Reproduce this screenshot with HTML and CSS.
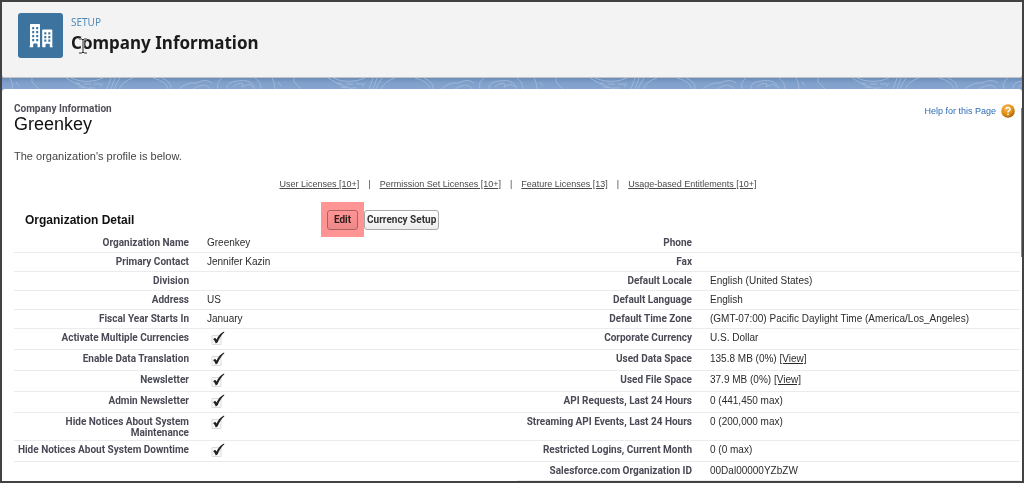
FILE: index.html
```html
<!DOCTYPE html>
<html lang="en">
<head>
<meta charset="utf-8">
<title>Company Information</title>
<link rel="stylesheet" href="styles.css">
</head>
<body>
<svg class="defs" width="0" height="0" aria-hidden="true">
  <symbol id="check" viewBox="0 0 16 15">
    <path d="M3.500 4.500h9v9h-9z" fill="#fafafa" stroke="#dcdcdc"/>
    <path d="M4.600 8.200l2-1.400 1.500 1.800C9.600 5.200 12 2.200 15.500.6L15.900 1.200C13 3.700 10.800 7 9.200 11.300L7.300 12.500C6.600 10.600 5.800 9.200 4.600 8.200z" fill="#222"/>
  </symbol>
</svg>
<div class="window">
  <header class="setup-header">
    <div class="tile">
      <svg width="24" height="24" viewBox="0 0 24 24" aria-hidden="true">
        <path fill="#fff" fill-rule="evenodd" d="M1 .8Q1 0 1.800 0H10.200Q11 0 11 .8V22.500Q11 23.300 10.200 23.300H8.500V20.300Q8.500 19.500 7.700 19.500H5Q4.200 19.500 4.200 20.300V23.300H1Q.2 23.300 .4 22.500L1 22zM3.200 3v2.200h2V3zM7.200 3v2.200h2V3zM3.200 7v2.200h2V7zM7.200 7v2.200h2V7zM3.200 11v2.200h2V11zM7.200 11v2.200h2V11zM3.200 15v2.200h2V15zM7.200 15v2.200h2V15z"/>
        <path fill="#fff" fill-rule="evenodd" d="M13.200 6.300Q13.200 5.500 14 5.500H22.500Q23.300 5.500 23.300 6.300V22L23.800 22.700Q23.800 23.300 23 23.300H20.800V20.500Q20.800 19.700 20 19.700H17.300Q16.500 19.700 16.500 20.500V23.300H14Q13.200 23.300 13.200 22.500zM15.300 8.300v2.200h2V8.300zM19.300 8.300v2.200h2V8.300zM15.300 12v2.200h2V12zM19.300 12v2.200h2V12zM15.300 15.500v2.200h2v-2.200zM19.300 15.500v2.200h2v-2.200z"/>
      </svg>
    </div>
    <div class="titles">
      <div class="eyebrow">SETUP</div>
      <h1 class="title">Company Information
        <svg class="cursor" width="10" height="16" viewBox="0 0 10 16" aria-hidden="true"><path d="M1 1h3l1 1 1-1h3M5 2v12M1 15h3l1-1 1 1h3" fill="none" stroke="#fff" stroke-width="2.500"/><path d="M1 1h3l1 1 1-1h3M5 2v12M1 15h3l1-1 1 1h3" fill="none" stroke="#222"/></svg>
      </h1>
    </div>
  </header>
  <svg class="band" height="11" aria-hidden="true">
    <defs>
      <linearGradient id="shade" x1="0" y1="0" x2="0" y2="1"><stop offset="0" stop-color="#6a8cb5"/><stop offset=".4" stop-color="#7f9fcb"/><stop offset="1" stop-color="#86a6d1"/></linearGradient>
      <pattern id="contours" width="262" height="11" patternUnits="userSpaceOnUse">
        <path d="M8 0Q11 5 11 11M14 4l3 4M30 0v4l7 7M64 0Q74 7 88 11M69 0Q85 7 101 0M74 5l4 1M82 6h7M92 6h7M77 9l6 1M87 10h6M98 9l3-4M109 0l-4 11M113 0l-4 11M118 0Q114 6 112 11M131 0Q121 3 117 11M151 0Q164 3 166 11M160 0Q170 4 169 11M177 11Q185 4 194 5Q204 0 210 5M191 11Q204 3 208 11M216 11Q214 4 220 0M225 11Q224 4 235 3Q250 0 253 11M231 9Q236 4 241 6L240 9L247 6L251 9M253 0Q259 4 259 11" fill="none" stroke="#a9c0df" stroke-opacity=".7"/>
      </pattern>
    </defs>
    <rect width="100%" height="11" fill="url(#shade)"/>
    <rect width="100%" height="11" fill="url(#contours)"/>
  </svg>
  <main class="content">
    <div class="page-head">
      <div>
        <div class="page-type">Company Information</div>
        <h2 class="page-name">Greenkey</h2>
      </div>
      <a class="help" href="#">Help for this Page
        <svg width="14" height="14" viewBox="0 0 14 14" aria-hidden="true">
          <defs><radialGradient id="amber" cx=".4" cy=".3" r=".75"><stop offset="0" stop-color="#f3b755"/><stop offset=".6" stop-color="#e08f14"/><stop offset="1" stop-color="#9c5d08"/></radialGradient></defs>
          <circle cx="7" cy="7" r="6.800" fill="url(#amber)"/>
          <path d="M4.900 5.300Q5 3.400 7 3.400T9.100 5.200Q9.100 6.300 7.900 6.900Q7 7.400 7 8.400M7 9.700v1.500" fill="none" stroke="#fff" stroke-width="1.500"/>
        </svg>
      </a>
    </div>
    <p class="intro">The organization's profile is below.</p>
    <nav class="jump">
      <a href="#">User Licenses [10+]</a><span class="bar">|</span>
      <a href="#">Permission Set Licenses [10+]</a><span class="bar">|</span>
      <a href="#">Feature Licenses [13]</a><span class="bar">|</span>
      <a href="#">Usage-based Entitlements [10+]</a>
    </nav>
    <div class="section-head">
      <h3 class="section-title">Organization Detail</h3>
      <div class="actions">
        <span class="highlight"><button class="btn" type="button">Edit</button></span>
        <button class="btn" type="button">Currency Setup</button>
      </div>
    </div>
    <table class="detail">
      <colgroup><col class="c-label"><col class="c-value"><col class="c-label"><col class="c-value"></colgroup>
      <tbody>
      <tr><th scope="row">Organization Name</th><td>Greenkey</td><th scope="row">Phone</th><td></td></tr>
      <tr><th scope="row">Primary Contact</th><td>Jennifer Kazin</td><th scope="row">Fax</th><td></td></tr>
      <tr><th scope="row">Division</th><td></td><th scope="row">Default Locale</th><td>English (United States)</td></tr>
      <tr><th scope="row">Address</th><td>US</td><th scope="row">Default Language</th><td>English</td></tr>
      <tr><th scope="row">Fiscal Year Starts In</th><td>January</td><th scope="row">Default Time Zone</th><td>(GMT-07:00) Pacific Daylight Time (America/Los_Angeles)</td></tr>
      <tr class="tall"><th scope="row">Activate Multiple Currencies</th><td><svg class="check" role="img" aria-label="Checked"><use href="#check"/></svg></td><th scope="row">Corporate Currency</th><td>U.S. Dollar</td></tr>
      <tr class="tall"><th scope="row">Enable Data Translation</th><td><svg class="check" role="img" aria-label="Checked"><use href="#check"/></svg></td><th scope="row">Used Data Space</th><td>135.8 MB (0%) <a href="#">[View]</a></td></tr>
      <tr class="tall"><th scope="row">Newsletter</th><td><svg class="check" role="img" aria-label="Checked"><use href="#check"/></svg></td><th scope="row">Used File Space</th><td>37.9 MB (0%) <a href="#">[View]</a></td></tr>
      <tr class="tall"><th scope="row">Admin Newsletter</th><td><svg class="check" role="img" aria-label="Checked"><use href="#check"/></svg></td><th scope="row">API Requests, Last 24 Hours</th><td>0 (441,450 max)</td></tr>
      <tr class="tall"><th scope="row">Hide Notices About System Maintenance</th><td><svg class="check" role="img" aria-label="Checked"><use href="#check"/></svg></td><th scope="row">Streaming API Events, Last 24 Hours</th><td>0 (200,000 max)</td></tr>
      <tr class="tall"><th scope="row">Hide Notices About System Downtime</th><td><svg class="check" role="img" aria-label="Checked"><use href="#check"/></svg></td><th scope="row">Restricted Logins, Current Month</th><td>0 (0 max)</td></tr>
      <tr><th class="blank"></th><td class="blank"></td><th scope="row">Salesforce.com Organization ID</th><td>00Dal00000YZbZW</td></tr>
      </tbody>
    </table>
    <div class="scroll-thumb"></div>
  </main>
</div>
</body>
</html>
```
FILE: styles.css
```css
* { box-sizing: border-box; }
body {
  margin: 0;
  font-family: "Liberation Sans", Arial, sans-serif;
  font-size: 10px;
  color: #2b2b2b;
}
.defs { position: absolute; }
.window {
  display: flex;
  flex-direction: column;
  min-height: 100vh;
  border: 2px solid #424244;
  background: #86a6d1;
}
.setup-header {
  display: flex;
  gap: 8px;
  padding: 11px 16px 19px;
  background: #f3f3f3;
  border-bottom: 1px solid #c3c5c8;
  border-radius: 0 0 3px 3px;
}
.tile {
  display: flex;
  align-items: center;
  justify-content: center;
  width: 45px;
  height: 45px;
  border-radius: 3px;
  background: #3c749f;
}
.titles { font-family: "Noto Sans", "Open Sans", sans-serif; }
.eyebrow {
  padding-top: 1px;
  font-size: 10px;
  line-height: 16px;
  color: #4f8bb9;
}
.title {
  position: relative;
  margin: 0;
  font-size: 17px;
  line-height: 26px;
  color: #1b1b1b;
}
.cursor { position: absolute; left: 7px; top: 8px; }
.band { display: block; width: 100%; }
.content {
  position: relative;
  flex: 1;
  padding: 14px 0 0 12px;
  background: #fff;
  border-radius: 3px 3px 0 0;
}
.page-head {
  display: flex;
  justify-content: space-between;
  padding-right: 7px;
}
.page-type {
  font-family: Roboto, sans-serif;
  font-size: 10px;
  font-weight: bold;
  line-height: 11px;
  color: #4f4f59;
}
.page-name {
  margin: 0;
  font-size: 18px;
  font-weight: normal;
  line-height: 20px;
  color: #111;
}
.help {
  display: flex;
  gap: 5px;
  align-items: center;
  height: 16px;
  font-size: 9px;
  color: #2f6db5;
  text-decoration: none;
}
.intro {
  margin: 15px 0 0;
  font-size: 11px;
  line-height: 14px;
  color: #444;
}
.jump {
  display: flex;
  justify-content: center;
  gap: 9px;
  margin-top: 15px;
  font-size: 9px;
  line-height: 12px;
  color: #4a4a4a;
}
.jump a { color: #4a4a4a; }
.section-head {
  display: grid;
  grid-template-columns: 307px 1fr;
  align-items: center;
  height: 31px;
  margin: 12px 0 1px;
}
.section-title {
  margin: 0;
  padding-left: 11px;
  font-size: 12px;
  color: #111;
}
.actions { display: flex; align-items: center; }
.highlight {
  position: relative;
  display: flex;
  align-items: center;
  width: 43px;
  height: 35px;
  padding-left: 6px;
}
.highlight::after {
  content: "";
  position: absolute;
  inset: 0;
  background: #ff9494;
  mix-blend-mode: multiply;
}
.btn {
  height: 20px;
  padding: 0 2px;
  border: 1px solid #a9a9a9;
  border-radius: 3px;
  background: linear-gradient(#fff, #ececec);
  font-family: Roboto, sans-serif;
  font-size: 10px;
  font-weight: bold;
  color: #333;
}
.highlight .btn { width: 31px; }
.detail {
  width: calc(100% - 2px);
  table-layout: fixed;
  border-collapse: separate;
  border-spacing: 0;
}
.c-label { width: 184px; }
.detail th, .detail td {
  height: 19px;
  padding: 2px 9px 0 0;
  border-bottom: 1px solid #ebebed;
  vertical-align: top;
  line-height: 14px;
}
.detail th {
  padding-top: 3px;
  font-family: Roboto, sans-serif;
  line-height: 11px;
  text-align: right;
  color: #4a4a56;
}
.detail td { padding-left: 9px; }
.detail a { color: #2b2b2b; }
.detail .tall th, .detail .tall td { height: 21px; }
.detail .tall th { padding-bottom: 2px; }
.detail .blank { border-bottom: 0; }
.check { display: block; width: 19px; height: 15px; }
.scroll-thumb {
  position: absolute;
  top: 19px;
  right: 0;
  width: 1px;
  height: 149px;
  background: #858585;
}
```
